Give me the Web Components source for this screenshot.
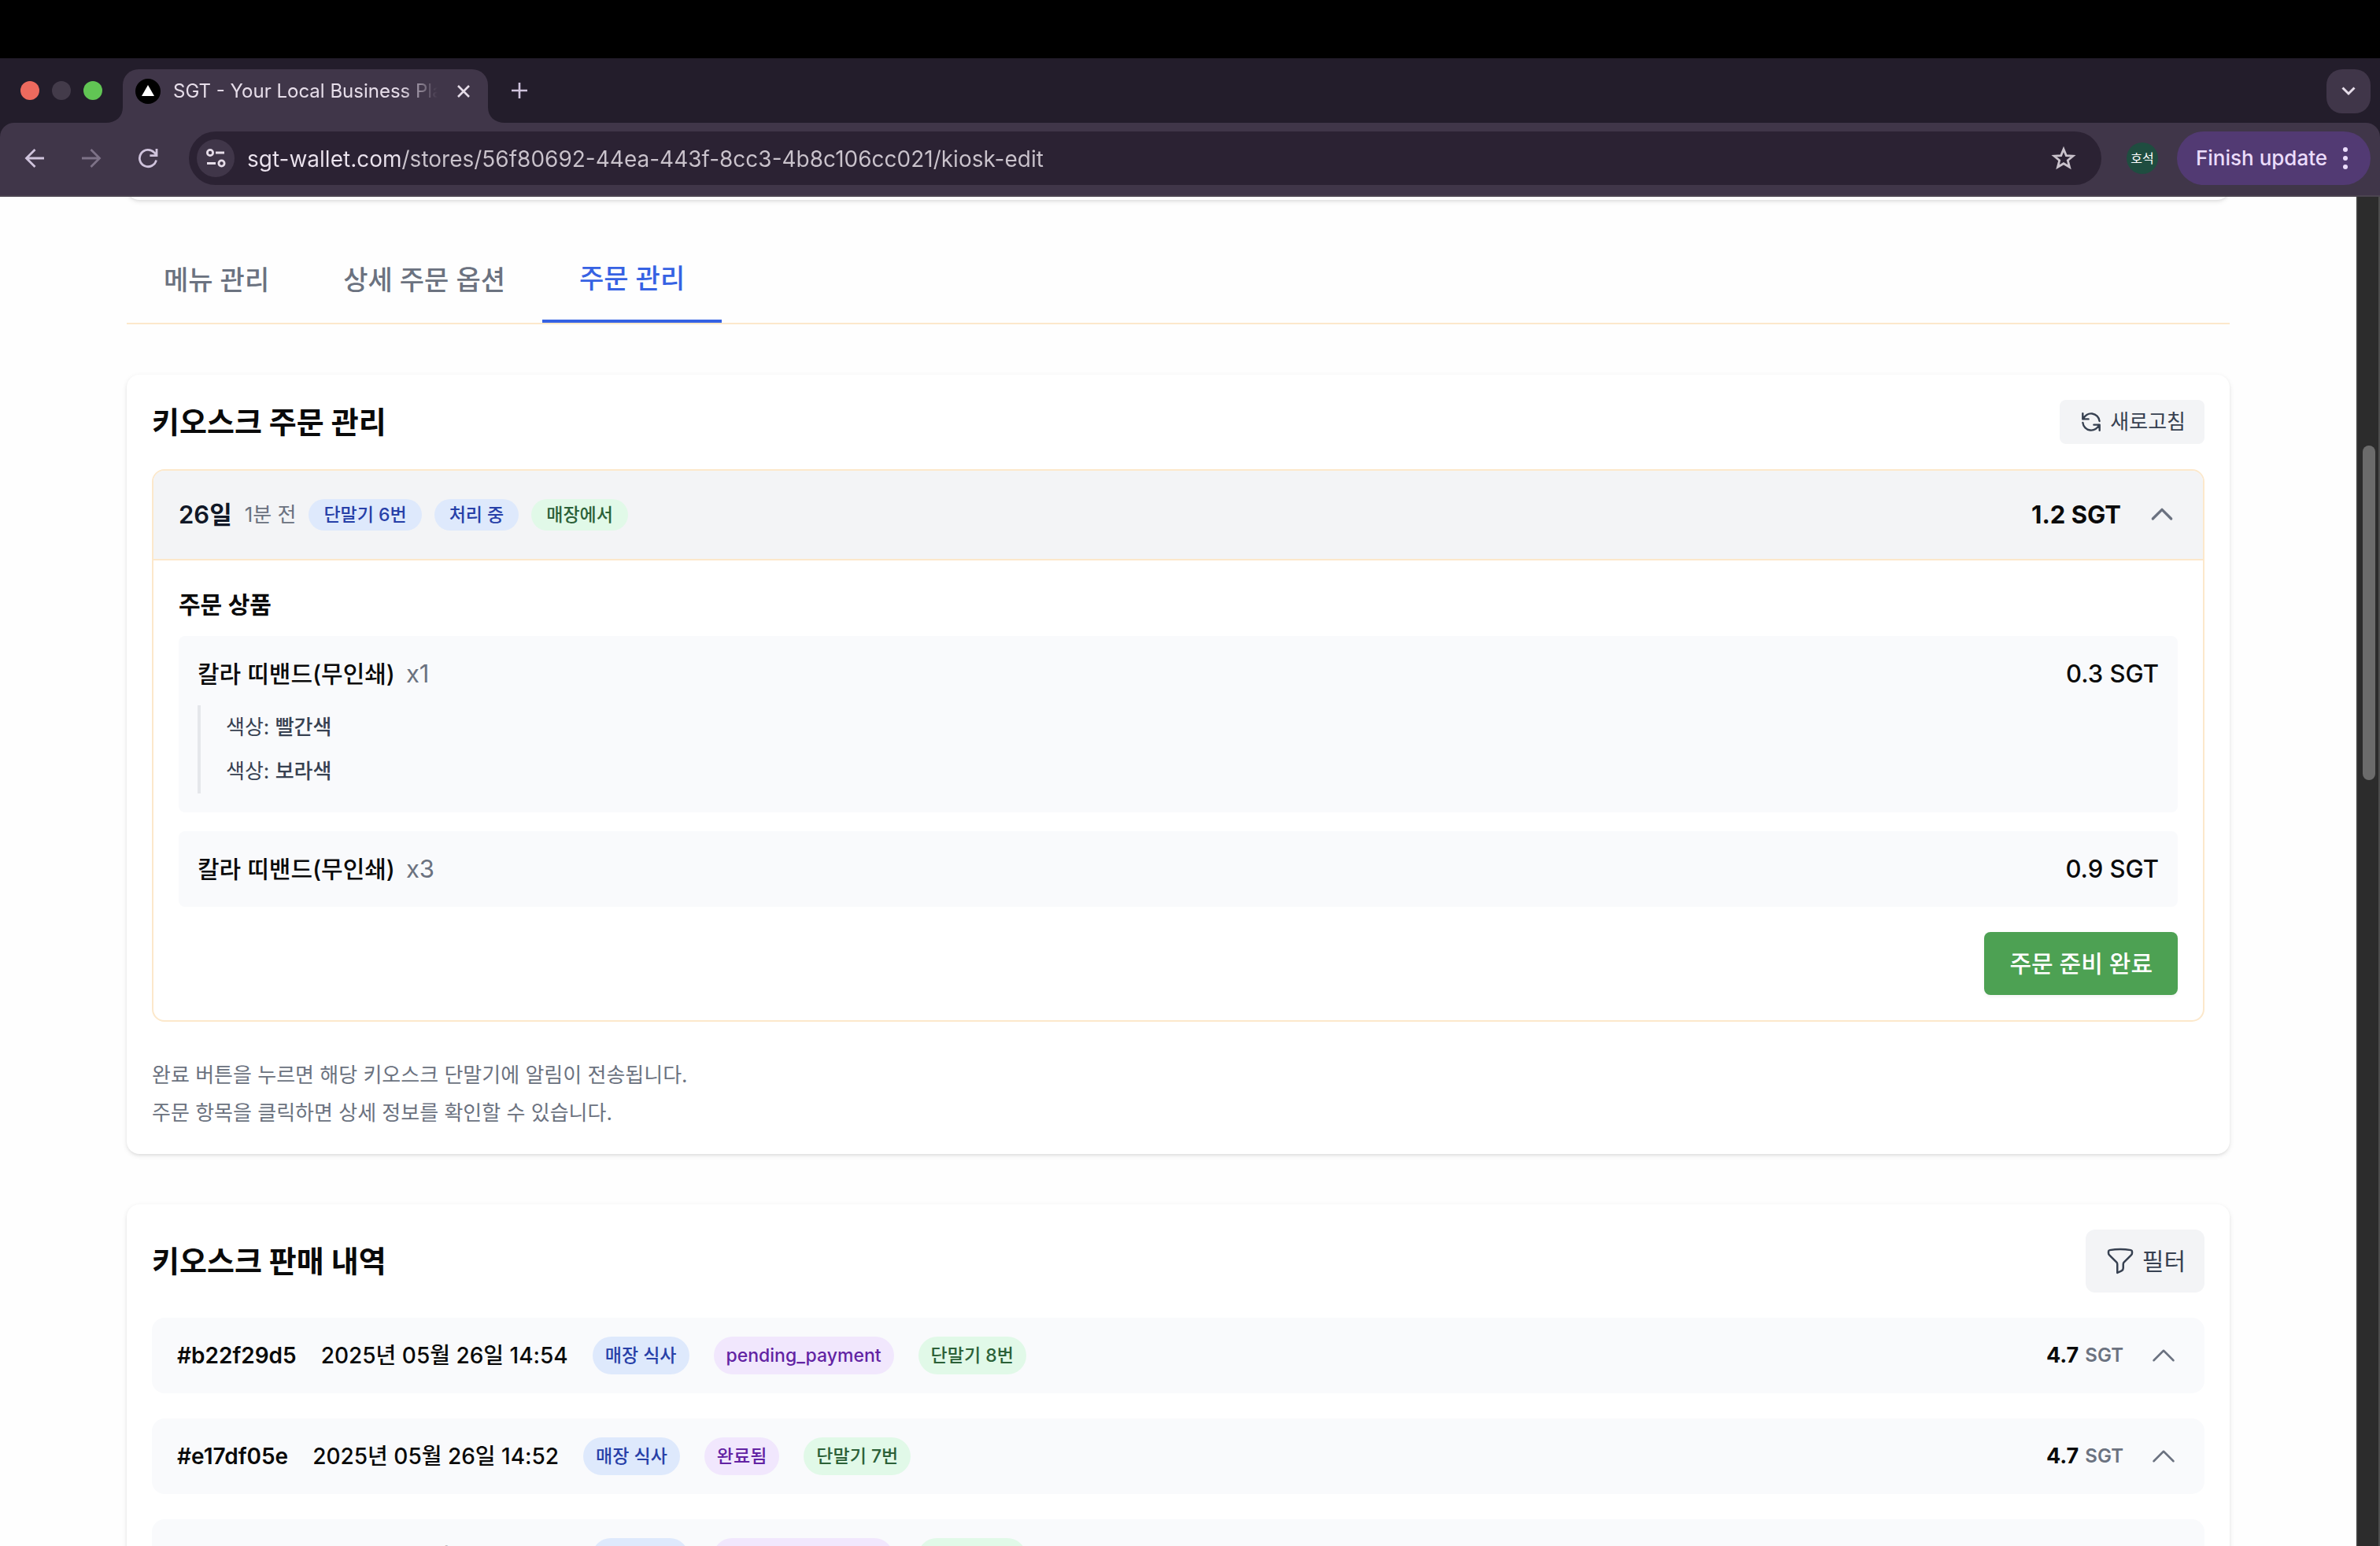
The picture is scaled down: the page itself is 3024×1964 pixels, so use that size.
<!DOCTYPE html>
<html lang="ko">
<head>
<meta charset="utf-8">
<title>SGT - Your Local Business Platform</title>
<style>
  html, body { margin: 0; height: 100%; }
  body { background: #000; overflow: hidden; font-family: Inter, "Noto Sans CJK KR", sans-serif; color: #0a0a0a; }
</style>
</head>
<body>
<browser-window>
  <browser-tab slot="tabs">SGT - Your Local Business Platform</browser-tab>
  <browser-toolbar slot="toolbar" url="sgt-wallet.com/stores/56f80692-44ea-443f-8cc3-4b8c106cc021/kiosk-edit"></browser-toolbar>

  <panel-card tail></panel-card>
  <kiosk-tabs>
    <kiosk-tab>메뉴 관리</kiosk-tab>
    <kiosk-tab>상세 주문 옵션</kiosk-tab>
    <kiosk-tab active>주문 관리</kiosk-tab>
  </kiosk-tabs>

  <panel-card heading="키오스크 주문 관리">
    <soft-button slot="action" size="small" icon="refresh">새로고침</soft-button>
    <order-card day="26일" ago="1분 전" total="1.2 SGT">
      <status-badge slot="badges" tone="blue">단말기 6번</status-badge>
      <status-badge slot="badges" tone="blue">처리 중</status-badge>
      <status-badge slot="badges" tone="green">매장에서</status-badge>
      <order-item name="칼라 띠밴드(무인쇄)" count="x1" price="0.3 SGT" options="색상:빨간색,색상:보라색"></order-item>
      <order-item name="칼라 띠밴드(무인쇄)" count="x3" price="0.9 SGT"></order-item>
    </order-card>
    <help-notes>
      <span>완료 버튼을 누르면 해당 키오스크 단말기에 알림이 전송됩니다.</span>
      <span>주문 항목을 클릭하면 상세 정보를 확인할 수 있습니다.</span>
    </help-notes>
  </panel-card>

  <panel-card heading="키오스크 판매 내역">
    <soft-button slot="action" icon="funnel">필터</soft-button>
    <sale-row code="#b22f29d5" date="2025년 05월 26일 14:54" amount="4.7">
      <status-badge tone="blue" large>매장 식사</status-badge>
      <status-badge tone="purple" large>pending_payment</status-badge>
      <status-badge tone="green" large>단말기 8번</status-badge>
    </sale-row>
    <sale-row code="#e17df05e" date="2025년 05월 26일 14:52" amount="4.7">
      <status-badge tone="blue" large>매장 식사</status-badge>
      <status-badge tone="purple" large>완료됨</status-badge>
      <status-badge tone="green" large>단말기 7번</status-badge>
    </sale-row>
    <sale-row code="#b22f29d5" date="2025년 05월 26일 14:50" amount="4.7">
      <status-badge tone="blue" large>매장 식사</status-badge>
      <status-badge tone="purple" large>pending_payment</status-badge>
      <status-badge tone="green" large>단말기 8번</status-badge>
    </sale-row>
  </panel-card>
</browser-window>

<script>
const base = `:host, *, *::before, *::after { box-sizing: border-box; }
  button { font: inherit; color: inherit; background: none; border: 0; padding: 0; margin: 0; cursor: pointer; }
  svg { display: block; flex: none; }`;

function define(name, render) {
  customElements.define(name, class extends HTMLElement {
    constructor() {
      super();
      this.attachShadow({ mode: 'open' });
    }
    connectedCallback() {
      const t = document.createElement('template');
      t.innerHTML = render(this);
      this.shadowRoot.replaceChildren(t.content.cloneNode(true));
    }
  });
}
const attr = (el, name) => el.getAttribute(name) || '';

define('browser-window', () => `<style>${base}
  :host { display: flex; flex-direction: column; height: 100vh; padding-top: 74px; background: #000; }
  .strip { flex: none; display: flex; height: 82px; background: #231d2b; padding: 0 12px 0 26px; }
  .lights { display: flex; gap: 16px; align-self: center; width: 108px; }
  .lights i { width: 24px; height: 24px; border-radius: 50%; flex: none; }
  .plus { width: 36px; align-self: center; display: grid; place-items: center; color: #cfc3dc; }
  .more { margin: 14px 0 0 auto; width: 56px; height: 56px; border-radius: 20px; background: #403649; color: #e6dde9; display: grid; place-items: center; }
  .page { flex: 1; min-height: 0; display: flex; background: #fefefe; }
  main { flex: 1; min-width: 0; overflow: hidden; padding: 0 161px; }
  .track { flex: none; display: flex; flex-direction: column; width: 30px; background: #2c2c2c; border-left: 2px solid #3a3a3a; border-right: 2px solid #4c4c4c; padding: 0 4px 0 6px; }
  .track i { flex: 425; border-radius: 8px; background: #6b6b6b; }
  .track::before { content: ""; flex: 316; }
  .track::after { content: ""; flex: 973; }
  </style>
  <header class="strip">
    <div class="lights"><i style="background:#ed6a5e"></i><i style="background:#433b4a"></i><i style="background:#61c554"></i></div>
    <slot name="tabs"></slot>
    <button class="plus" aria-label="New tab"><svg width="20" height="20" viewBox="0 0 20 20" stroke="currentColor" stroke-width="2.6" fill="none"><path d="M10 0v20M0 10h20"/></svg></button>
    <button class="more" aria-label="Search tabs"><svg width="18" height="12" viewBox="0 0 18 12" fill="none" stroke="currentColor" stroke-width="3"><path d="M1.5 1.5 9 9l7.500-7.500"/></svg></button>
  </header>
  <slot name="toolbar"></slot>
  <div class="page"><main><slot></slot></main><div class="track"><i></i></div></div>`);

define('browser-tab', () => `<style>${base}
  :host { display: flex; align-items: flex-end; color: #403649; }
  .tab { display: flex; align-items: center; width: 464px; height: 68px; padding: 0 22px 12px 16px; border-radius: 20px 20px 0 0; background: #403649; color: #e6dde9; }
  .title { flex: 1; min-width: 0; margin: 0 24px 0 16px; overflow: hidden; white-space: nowrap; font-size: 24px; line-height: 32px; -webkit-mask-image: linear-gradient(90deg, #000 86%, transparent); mask-image: linear-gradient(90deg, #000 86%, transparent); }
  </style>
  <svg width="22" height="20" viewBox="0 0 22 20" fill="currentColor"><path d="M22 0v20H0C14 20 22 12 22 0Z"/></svg>
  <div class="tab">
    <svg width="32" height="32" viewBox="0 0 32 32"><circle cx="16" cy="16" r="16"/><path d="M16 8l8 14H8Z" fill="#fff"/></svg>
    <span class="title"><slot></slot></span>
    <button aria-label="Close tab"><svg width="18" height="18" viewBox="0 0 18 18" stroke="currentColor" stroke-width="2.6"><path d="M2 2l14 14M16 2 2 16"/></svg></button>
  </div>
  <svg width="22" height="20" viewBox="0 0 22 20" fill="currentColor"><path d="M0 0v20h22C8 20 0 12 0 0Z"/></svg>`);

define('browser-toolbar', el => `<style>${base}
  :host { flex: none; display: block; background: #231d2b; }
  .bar { display: flex; align-items: center; height: 94px; padding: 0 12px 2px 20px; background: #403649; border-bottom: 2px solid #4b4450; border-radius: 18px 18px 0 0; color: #cfc3dc; }
  .nav { width: 48px; height: 48px; margin-right: 24px; display: grid; place-items: center; }
  .nav[disabled] { color: #7d7287; }
  .box { flex: 1; display: flex; align-items: center; height: 68px; margin-left: 4px; padding: 0 32px 0 10px; border-radius: 34px; background: #2b2233; }
  .site { width: 48px; height: 48px; border-radius: 50%; background: #403649; color: #e6dde9; display: grid; place-items: center; }
  input { flex: 1; min-width: 0; margin: 0 16px; padding: 2px 0 0; border: 0; outline: 0; font: inherit; font-size: 28px; line-height: 40px; color: #cdc6cf;
    background: linear-gradient(90deg, #ebe3ee 198px, #cac3cc 0); -webkit-background-clip: text; background-clip: text; -webkit-text-fill-color: transparent; }
  .avatar { width: 40px; height: 40px; margin: 0 24px 0 32px; border-radius: 50%; background: #1f4d40; color: #fff; font-size: 16px; line-height: 40px; text-align: center; white-space: nowrap; }
  .update { display: flex; align-items: center; justify-content: space-between; width: 246px; height: 68px; padding: 0 29px 0 24px; border-radius: 34px; background: #523a73; color: #ebdcfb; font-size: 26px; line-height: 40px; font-weight: 500; white-space: nowrap; }
  </style>
  <div class="bar">
    <button class="nav" aria-label="Back"><svg width="26" height="26" viewBox="0 0 26 26" fill="none" stroke="currentColor" stroke-width="2.800"><path d="M25 13H3M13.500 2 2.500 13l11 11"/></svg></button>
    <button class="nav" disabled aria-label="Forward"><svg width="26" height="26" viewBox="0 0 26 26" fill="none" stroke="currentColor" stroke-width="2.800"><path d="M1 13h22M12.500 2l11 11-11 11"/></svg></button>
    <button class="nav" aria-label="Reload"><svg width="26" height="26" viewBox="0 0 26 26" fill="none" stroke="currentColor" stroke-width="2.800"><path d="M23.500 15.500A10.700 10.700 0 1 1 20.800 5.600L23.500 8.400M24 1v8.600h-8.600"/></svg></button>
    <div class="box">
      <button class="site" aria-label="Site information"><svg width="26" height="26" viewBox="0 0 26 26" fill="none" stroke="currentColor" stroke-width="2.800"><circle cx="6" cy="6" r="3.600"/><path d="M13 6h11M2 19.500h11"/><circle cx="20.500" cy="19.500" r="3.600"/></svg></button>
      <input type="text" aria-label="Address" value="${attr(el, 'url')}">
      <button aria-label="Bookmark"><svg width="32" height="32" viewBox="0 0 32 32" fill="none" stroke="#cac3cc" stroke-width="2.800"><path d="M16 4.500l3.300 8.100 8.700.6-6.700 5.600 2.200 8.500L16 22.700l-7.500 4.600 2.200-8.500L4 13.200l8.700-.6Z"/></svg></button>
    </div>
    <div class="avatar">호석</div>
    <button class="update"><span>Finish update</span><svg width="6" height="28" viewBox="0 0 6 28" fill="currentColor"><circle cx="3" cy="3" r="3"/><circle cx="3" cy="14" r="3"/><circle cx="3" cy="25" r="3"/></svg></button>
  </div>`);

define('panel-card', el => `<style>${base}
  :host { display: block; margin-bottom: 64px; padding: 32px; border-radius: 16px; background: #fff; box-shadow: 0 2px 6px rgba(0,0,0,.1), 0 2px 4px -2px rgba(0,0,0,.1); }
  :host([tail]) { margin: -60px 0 48px; }
  .head { display: flex; align-items: center; justify-content: space-between; margin-bottom: 32px; }
  h2 { margin: 0; font-size: 38px; line-height: 56px; font-weight: 700; }
  .stack { display: flex; flex-direction: column; gap: 32px; }
  </style>
  ${el.hasAttribute('heading') ? `<div class="head"><h2>${attr(el, 'heading')}</h2><slot name="action"></slot></div>` : ''}
  <div class="stack"><slot></slot></div>`);

define('kiosk-tabs', () => `<style>${base}
  :host { display: flex; align-items: stretch; margin-bottom: 64px; border-bottom: 2px solid #fce8cb; }
  </style><slot></slot>`);

define('kiosk-tab', () => `<style>${base}
  :host { display: flex; color: #6b7280; }
  :host([active]) { color: #3662e3; }
  button { height: 108px; padding: 0 47px; font-size: 34px; line-height: 56px; font-weight: 500; white-space: nowrap; }
  :host([active]) button { border-bottom: 4px solid #3662e3; }
  </style><button role="tab"><slot></slot></button>`);

const icons = {
  refresh: `<svg width="24" height="24" viewBox="0 0 24 24" fill="none" stroke="currentColor" stroke-width="2.400" stroke-linecap="round" stroke-linejoin="round"><path d="M1.900 8.400A10.700 10.700 0 0 1 22.600 11M1.400 13A10.700 10.700 0 0 0 22.100 15.600M1.300 1.300v7.100h7.300M22.700 22.700v-7.100h-7.300"/></svg>`,
  funnel: `<svg width="40" height="40" viewBox="0 0 24 24" fill="none" stroke="currentColor" stroke-width="1.500" stroke-linecap="round" stroke-linejoin="round"><path d="M12 3c2.755 0 5.455.232 8.083.678.533.09.917.556.917 1.096v1.044a2.250 2.250 0 0 1-.659 1.591l-5.432 5.432a2.250 2.250 0 0 0-.659 1.591v2.927a2.250 2.250 0 0 1-1.244 2.013L9.750 21v-6.568a2.250 2.250 0 0 0-.659-1.591L3.659 7.409A2.250 2.250 0 0 1 3 5.818V4.774c0-.54.384-1.006.917-1.096A48.320 48.320 0 0 1 12 3Z"/></svg>`
};
const chevron = (path, width) => `<svg width="40" height="40" viewBox="0 0 24 24" fill="none" stroke="#6b7280" stroke-width="${width}" stroke-linecap="round" stroke-linejoin="round"><path d="${path}"/></svg>`;

define('soft-button', el => `<style>${base}
  :host { display: block; }
  button { display: flex; align-items: center; gap: 8px; height: 80px; padding: 0 24px; border-radius: 12px; background: #f3f4f6; color: #374151; font-size: 30px; line-height: 48px; white-space: nowrap; }
  :host([size=small]) button { gap: 12px; height: 56px; padding: 0 24px 0 28px; border-radius: 8px; font-size: 26px; line-height: 40px; }
  </style><button>${icons[attr(el, 'icon')]}<slot></slot></button>`);

define('status-badge', () => `<style>${base}
  :host { display: block; padding: 0 19px; border-radius: 24px; font-size: 23px; line-height: 40px; font-weight: 500; white-space: nowrap; }
  :host([large]) { padding: 4px 16px; }
  :host([tone=blue]) { background: #dee9fc; color: #2740a8; }
  :host([tone=green]) { background: #e1f9e8; color: #2c6138; }
  :host([tone=purple]) { background: #f1e7fd; color: #6223a3; }
  </style><slot></slot>`);

define('order-card', el => `<style>${base}
  :host { display: block; border: 2px solid #fce8cb; border-radius: 16px; overflow: hidden; }
  .head { display: flex; align-items: center; gap: 16px; width: 100%; height: 114px; padding: 0 32px; background: #f3f4f6; border-bottom: 2px solid #fce8cb; text-align: left; white-space: nowrap; }
  .day { font-size: 31px; line-height: 48px; font-weight: 600; color: #111827; }
  .ago { font-size: 26px; line-height: 40px; color: #6b7280; }
  .total { margin: 0 16px 0 auto; font-size: 31px; line-height: 48px; font-weight: 700; }
  .body { padding: 32px; }
  h3 { margin: 0 0 16px; font-size: 30px; line-height: 48px; font-weight: 600; }
  .items { display: flex; flex-direction: column; gap: 24px; margin-bottom: 32px; }
  .done { display: block; height: 80px; margin-left: auto; padding: 0 32px; border-radius: 8px; background: #4da153; color: #fff; font-size: 30px; line-height: 48px; font-weight: 500; box-shadow: 0 2px 4px rgba(0,0,0,.05); }
  </style>
  <button class="head" aria-expanded="true"><span class="day">${attr(el, 'day')}</span><span class="ago">${attr(el, 'ago')}</span><slot name="badges"></slot><span class="total">${attr(el, 'total')}</span>${chevron('M5 15l7-7 7 7', 2)}</button>
  <div class="body"><h3>주문 상품</h3><div class="items"><slot></slot></div><button class="done">주문 준비 완료</button></div>`);

define('order-item', el => `<style>${base}
  :host { display: block; padding: 24px; border-radius: 8px; background: #f9fafc; }
  .row { display: flex; gap: 14px; font-size: 31px; line-height: 48px; white-space: nowrap; }
  .name { font-size: 30px; font-weight: 500; }
  .count { color: #6b7280; }
  .price { margin-left: auto; font-weight: 500; }
  ul { list-style: none; margin: 16px 0 0; padding: 0 0 0 32px; border-left: 4px solid #e5e7eb; color: #374151; font-size: 26px; line-height: 40px; }
  li { padding: 8px 0; }
  b { font-weight: 500; }
  </style>
  <div class="row"><span class="name">${attr(el, 'name')}</span><span class="count">${attr(el, 'count')}</span><span class="price">${attr(el, 'price')}</span></div>
  ${attr(el, 'options') ? `<ul>${attr(el, 'options').split(',').map(o => { const [k, v] = o.split(':'); return `<li>${k}: <b>${v}</b></li>`; }).join('')}</ul>` : ''}`);

define('help-notes', () => `<style>${base}
  :host { display: flex; flex-direction: column; gap: 8px; padding-top: 16px; font-size: 26px; line-height: 40px; color: #6b7280; }
  </style><slot></slot>`);

define('sale-row', el => `<style>${base}
  :host { display: flex; align-items: center; gap: 31px; height: 96px; padding: 0 32px; border-radius: 16px; background: #f9fafc; font-size: 28px; line-height: 48px; white-space: nowrap; }
  .code { font-weight: 600; }
  .date { font-weight: 500; }
  .amount { margin-left: auto; display: flex; align-items: center; gap: 8px; font-size: 27px; font-weight: 700; }
  .unit { font-size: 24px; color: #6b7280; font-weight: 600; }
  </style>
  <span class="code">${attr(el, 'code')}</span><span class="date">${attr(el, 'date')}</span><slot></slot>
  <span class="amount"><span>${attr(el, 'amount')}</span><span class="unit">SGT</span></span>
  <button aria-label="상세 보기">${chevron('M4.500 15.750l7.500-7.500 7.500 7.500', 1.5)}</button>`);
</script>
</body>
</html>
